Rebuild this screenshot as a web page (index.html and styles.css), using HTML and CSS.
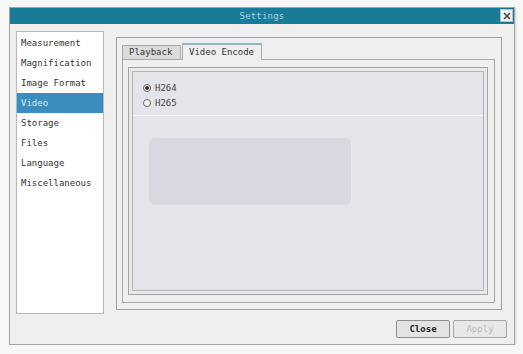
FILE: index.html
```html
<!DOCTYPE html>
<html lang="en">
<head>
    <meta charset="UTF-8">
    <meta name="viewport" content="width=device-width, initial-scale=1.0">
    <title>Settings</title>
    <link rel="stylesheet" href="styles.css">
</head>
<body>

    <div class="dialog">
        <div class="titlebar">
            <span class="title">Settings</span>
            <button type="button" class="close-x">
                <svg width="8" height="8" viewBox="0 0 8 8"><path d="M1 1L7 7M7 1L1 7" stroke="#444" stroke-width="1.5"/></svg>
            </button>
        </div>

        <div class="dialog-body">
            <ul class="menu">
                <li>Measurement</li>
                <li>Magnification</li>
                <li>Image Format</li>
                <li class="selected">Video</li>
                <li>Storage</li>
                <li>Files</li>
                <li>Language</li>
                <li>Miscellaneous</li>
            </ul>

            <div class="main">
                <div class="frame">
                    <div class="tabs">
                        <div class="tab">Playback</div>
                        <div class="tab active">Video Encode</div>
                    </div>
                    <div class="pane">
                        <div class="group">
                            <div class="group-inner">
                                <div class="radios">
                                    <label class="radio"><span class="dot checked"></span>H264</label>
                                    <label class="radio"><span class="dot"></span>H265</label>
                                </div>
                                <div class="shade"></div>
                            </div>
                        </div>
                    </div>
                </div>

                <div class="actions">
                    <button type="button" class="btn primary">Close</button>
                    <button type="button" class="btn" disabled>Apply</button>
                </div>
            </div>
        </div>
    </div>

</body>
</html>
```

FILE: styles.css
```css
body {
    font-family: 'DejaVu Sans Mono', 'Liberation Mono', monospace;
    font-size: 9px;
    background-color: #f7f7f7;
    margin: 0;
    padding: 7px 0 0 9px;
}

.dialog {
    width: 506px;
    height: 338px;
    box-sizing: border-box;
    border: 1px solid #a3a3a3;
    background-color: #efefef;
    box-shadow: 1px 1px 2px rgba(0, 0, 0, 0.15);
}

.titlebar {
    height: 16px;
    background-color: #1a7b98;
    display: flex;
    align-items: center;
    justify-content: center;
    position: relative;
}

.title {
    color: #a9d6e6;
    letter-spacing: 0.2px;
}

.close-x {
    position: absolute;
    right: 1px;
    top: 1px;
    width: 13px;
    height: 13px;
    padding: 0;
    border: 1px solid #b5c0c4;
    background-color: #f2f5f6;
    display: flex;
    align-items: center;
    justify-content: center;
}

.dialog-body {
    display: flex;
    padding: 7px 0 0 6px;
}

.menu {
    list-style: none;
    margin: 0;
    padding: 1px 0 0 0;
    width: 88px;
    height: 283px;
    box-sizing: border-box;
    border: 1px solid #b9b9b9;
    background-color: #ffffff;
}

.menu li {
    height: 20px;
    line-height: 20px;
    padding-left: 4px;
    color: #333;
}

.menu li.selected {
    background-color: #3b8dbf;
    color: #d2e8f5;
}

.main {
    width: 391px;
    margin: 6px 0 0 12px;
}

.frame {
    width: 386px;
    height: 273px;
    box-sizing: border-box;
    border: 1px solid #9e9e9e;
    padding: 5px 6px 6px 5px;
    display: flex;
    flex-direction: column;
}

.tabs {
    display: flex;
    align-items: flex-end;
    height: 16px;
    position: relative;
    z-index: 1;
}

.tab {
    height: 14px;
    line-height: 13px;
    padding: 0 6px;
    box-sizing: border-box;
    white-space: nowrap;
    border: 1px solid #a8a8a8;
    border-bottom: none;
    background-color: #dcdcdc;
    color: #333;
    width: 59px;
}

.tab.active {
    height: 17px;
    line-height: 14px;
    width: 80px;
    margin-left: 1px;
    margin-bottom: -1px;
    background-color: #efefef;
    border-top: 2px solid #8fb6c8;
}

.pane {
    flex: 1;
    border: 1px solid #a8a8a8;
    padding: 7px 6px 7px 5px;
    display: flex;
}

.group {
    flex: 1;
    border: 1px solid #a4a4a4;
    padding: 3px;
    display: flex;
    background-color: #e9e9ea;
}

.group-inner {
    flex: 1;
    border: 1px solid #b2b2b4;
    background-color: #e4e5e8;
}

.radios {
    padding: 8px 0 5px 10px;
    border-bottom: 1px solid #f2f3f4;
}

.radio {
    display: flex;
    align-items: center;
    height: 15px;
    color: #444;
}

.dot {
    width: 6px;
    height: 6px;
    border: 1px solid #666;
    border-radius: 50%;
    background-color: #f4f4f4;
    margin-right: 4px;
    position: relative;
}

.dot.checked::after {
    content: '';
    position: absolute;
    left: 1px;
    top: 1px;
    width: 4px;
    height: 4px;
    border-radius: 50%;
    background-color: #333;
}

.shade {
    width: 202px;
    height: 67px;
    margin: 22px 0 0 16px;
    border-radius: 6px;
    background-color: #d7d8e0;
}

.actions {
    display: flex;
    justify-content: flex-end;
    gap: 3px;
    margin-top: 10px;
}

.btn {
    width: 54px;
    height: 18px;
    padding: 0;
    font-family: inherit;
    font-size: 9px;
    border: 1px solid #a6a6a6;
    border-radius: 2px;
    background-color: #e8e8e8;
    color: #bbb;
}

.btn.primary {
    color: #222;
    font-weight: bold;
    background-color: #e4e4e4;
    border-color: #8e8e8e;
}
```
